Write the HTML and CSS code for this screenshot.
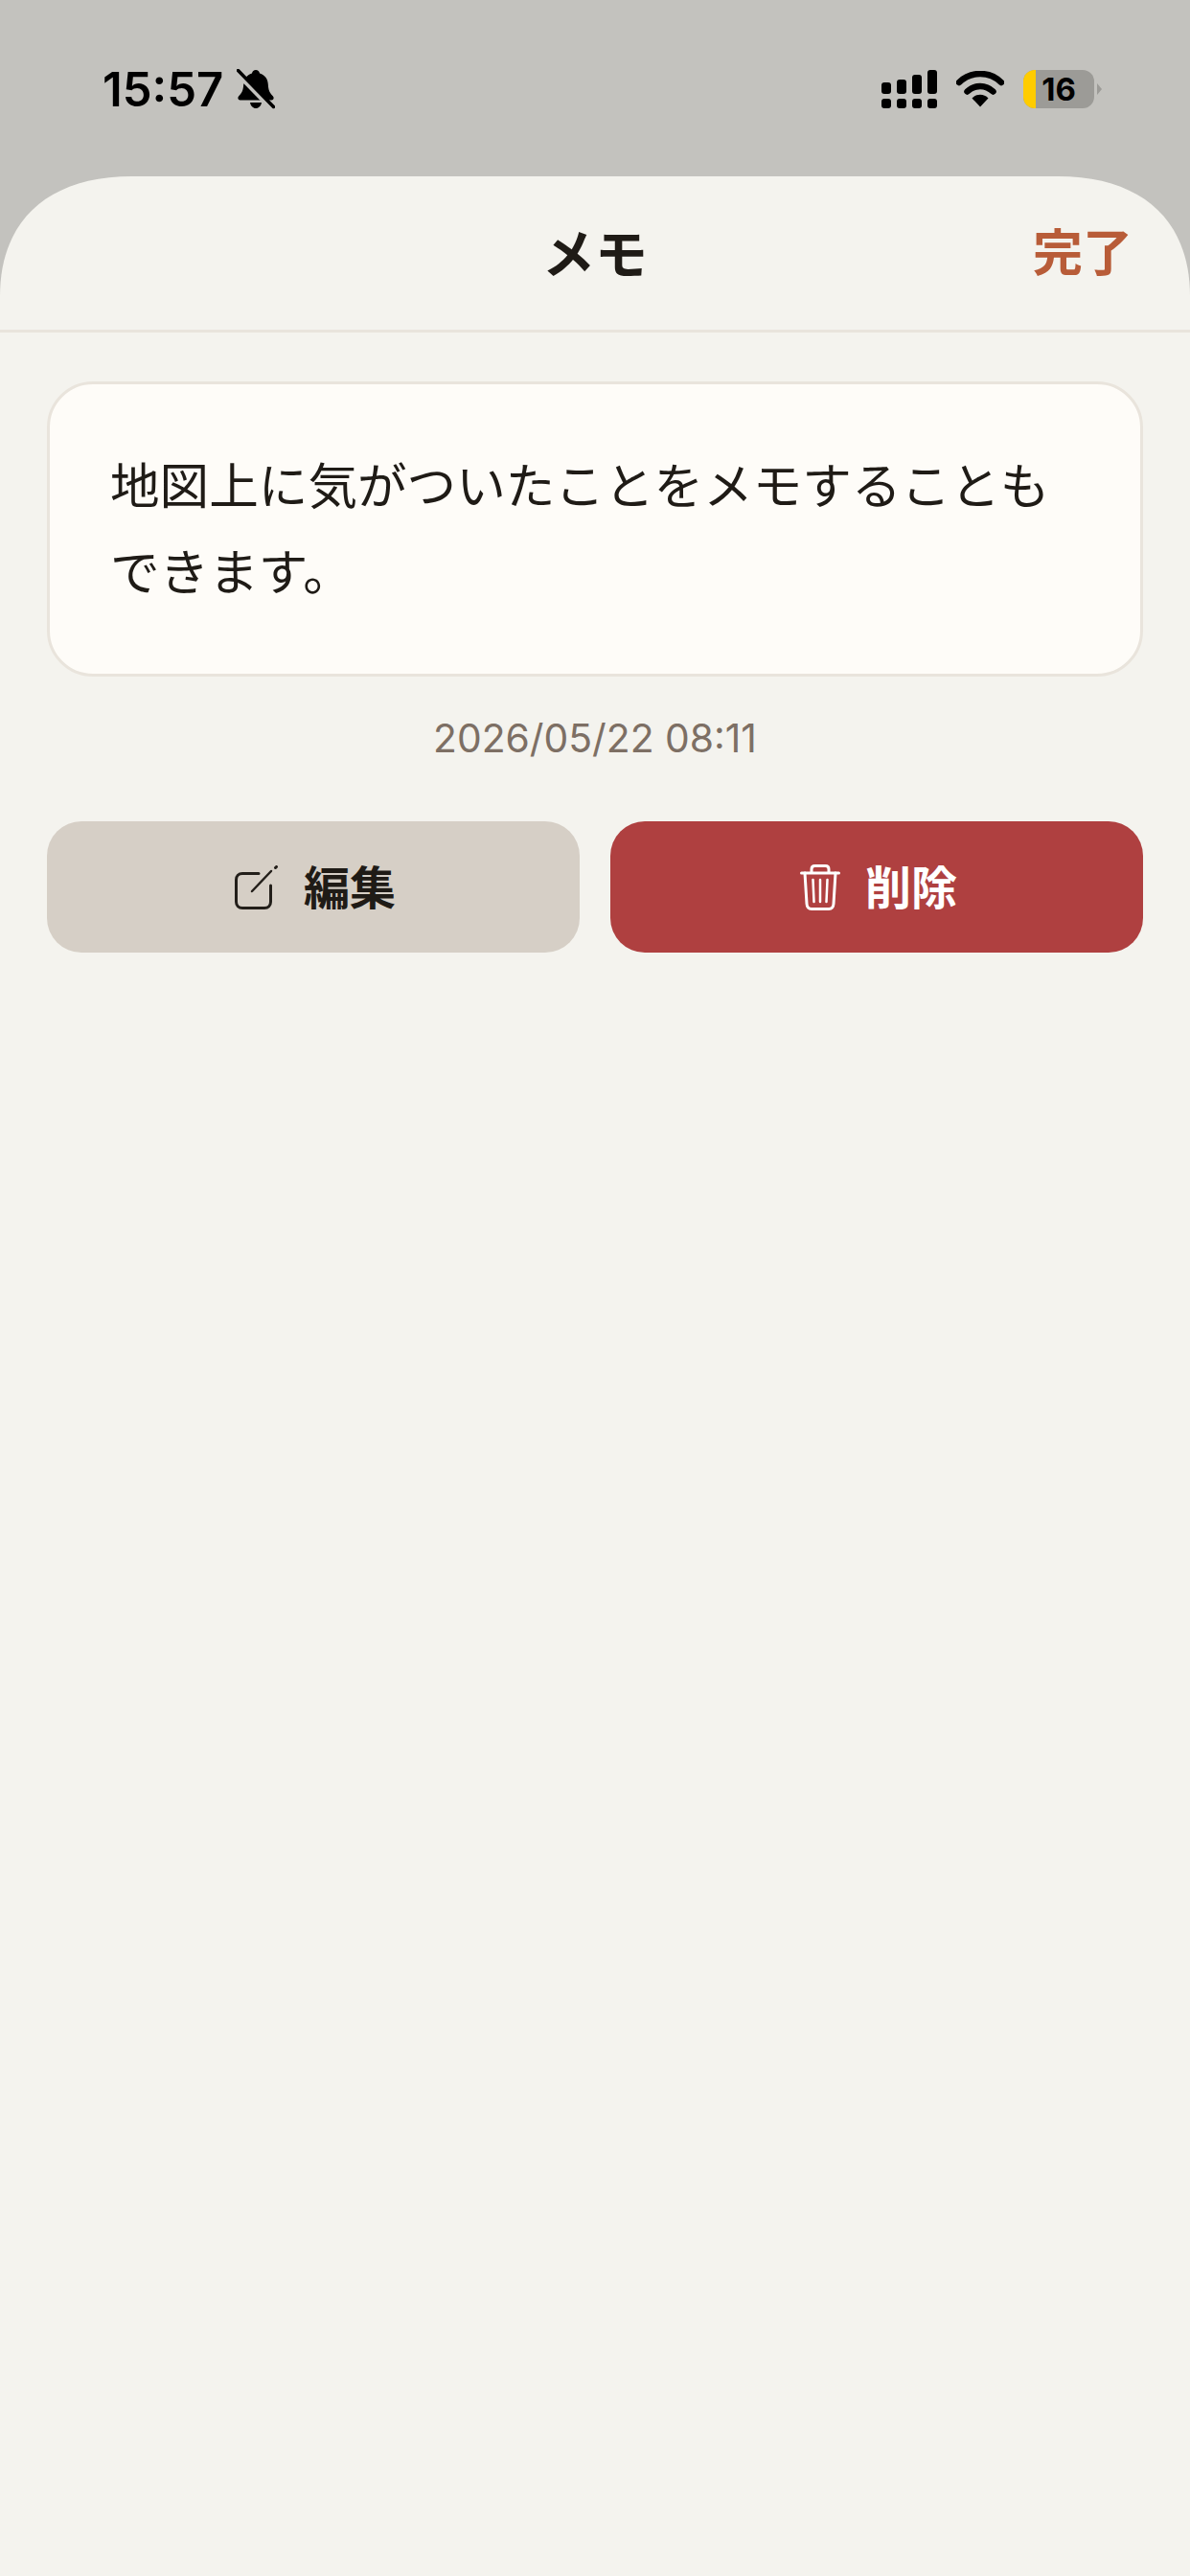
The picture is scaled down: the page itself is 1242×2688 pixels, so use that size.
FILE: index.html
```html
<!DOCTYPE html>
<html>

<head>
    <title>メモ</title>
    <link rel="stylesheet" href="styles.css">
</head>

<body>
    <div class="status-bar">
        <div class="status-left">
            <span class="time">15:57</span>
            <svg class="bell" width="40" height="42" viewBox="0 0 40 42">
                <path d="M20 1c2.200 0 3.600 1.500 4 3.500 5.500 1.600 8.500 6 8.800 11.500.3 6 1.700 9 5 12.200 1.500 1.500 1 4.300-1.500 4.300H3.700c-2.500 0-3-2.800-1.500-4.300 3.300-3.200 4.700-6.200 5-12.200C7.500 10.500 10.500 6.100 16 4.500 16.400 2.500 17.800 1 20 1z" fill="#000" />
                <path d="M14 35h12c-.6 3.500-3 6-6 6s-5.400-2.500-6-6z" fill="#000" />
                <path d="M-3 1l40 41" stroke="#c3c2be" stroke-width="5" />
                <path d="M1.500 1.500l37 38" stroke="#000" stroke-width="3.500" stroke-linecap="round" />
            </svg>
        </div>
        <div class="status-right">
            <svg width="58" height="40" viewBox="0 0 58 40">
                <rect x="0" y="13" width="10" height="12" rx="3" />
                <rect x="16" y="10" width="10" height="15" rx="3" />
                <rect x="32" y="5" width="10" height="20" rx="3" />
                <rect x="48" y="0" width="10" height="25" rx="3" />
                <rect x="0" y="30" width="10" height="10" rx="3" />
                <rect x="16" y="30" width="10" height="10" rx="3" />
                <rect x="32" y="30" width="10" height="10" rx="3" />
                <rect x="48" y="30" width="10" height="10" rx="3" />
            </svg>
            <svg class="wifi" width="50" height="38" viewBox="0 0 50 38">
                <path d="M3 12C15 0 35 0 47 12" fill="none" stroke="#000" stroke-width="6.500" stroke-linecap="round" />
                <path d="M11.500 21.500C19 14 31 14 38.500 21.500" fill="none" stroke="#000" stroke-width="6.500" stroke-linecap="round" />
                <path d="M16.500 28.500C21 23.500 29 23.500 33.500 28.500L25 37.500z" fill="#000" />
            </svg>
            <div class="battery">
                <div class="battery-body">
                    <div class="battery-level"></div>
                    <span class="battery-text">16</span>
                </div>
                <div class="battery-tip"></div>
            </div>
        </div>
    </div>

    <div class="sheet">
        <div class="header">
            <h2 class="title">メモ</h2>
            <a class="done">完了</a>
        </div>
        <div class="content">
            <div class="memo-card">地図上に気がついたことをメモすることもできます。</div>
            <p class="date">2026/05/22 08:11</p>
            <div class="actions">
                <button class="btn btn-edit">
                    <svg width="46" height="46" viewBox="0 0 46 46" fill="none" stroke="#231f1a" stroke-width="3" stroke-linecap="round">
                        <path d="M25 8.500H8C4 8.500 1.500 11 1.500 15v23c0 4 2.500 6.500 6.500 6.500h23c4 0 6.500-2.500 6.500-6.500V21" stroke-linejoin="round" />
                        <path d="M18 27L38 6" stroke-width="2.500" />
                        <path d="M43.500 1.500l-1 1" stroke-width="3" />
                    </svg>
                    <span class="btn-label">編集</span>
                </button>
                <button class="btn btn-delete">
                    <svg width="42" height="48" viewBox="0 0 42 48" fill="none" stroke="#fff" stroke-width="3" stroke-linecap="round" stroke-linejoin="round">
                        <path d="M1.500 9h39" />
                        <path d="M12 8V5c0-2.500 1.500-3.500 3.500-3.500h11C28.500 1.500 30 2.500 30 5v3" />
                        <path d="M5 9l2 32c.2 3.500 2 5.500 5 5.500h18c3 0 4.800-2 5-5.500l2-32" />
                        <path d="M13.500 16l1 23M21 16v23M28.500 16l-1 23" stroke-width="2.500" />
                    </svg>
                    <span class="btn-label">削除</span>
                </button>
            </div>
        </div>
    </div>
</body>
</html>
```

FILE: styles.css
```css
html,
body {
    margin: 0;
    height: 100%;
}

body {
    font-family: Inter, "Noto Sans CJK JP", sans-serif;
    background-color: #c3c2be;
    display: flex;
    flex-direction: column;
    color: #1f1b16;
}

.status-bar {
    height: 184px;
    box-sizing: border-box;
    padding: 0 92px 0 107px;
    display: flex;
    justify-content: space-between;
    align-items: flex-start;
    flex-shrink: 0;
}

.status-left {
    display: flex;
    align-items: center;
    gap: 14px;
    padding-top: 68px;
    height: 50px;
}

.time {
    font-size: 49px;
    font-weight: 600;
    color: #000;
}

.status-right {
    display: flex;
    align-items: center;
    gap: 20px;
    padding-top: 73px;
    height: 40px;
}

.battery {
    display: flex;
    align-items: center;
    gap: 3px;
}

.battery-body {
    position: relative;
    width: 74px;
    height: 40px;
    border-radius: 12px;
    background-color: #9c9b97;
    overflow: hidden;
    display: flex;
    align-items: center;
    justify-content: center;
}

.battery-level {
    position: absolute;
    left: 0;
    top: 0;
    bottom: 0;
    width: 13px;
    background-color: #ffcc00;
}

.battery-text {
    position: relative;
    font-size: 33px;
    font-weight: 700;
    color: #000;
}

.battery-tip {
    width: 0;
    height: 0;
    border-left: 5px solid #9c9b97;
    border-top: 6px solid transparent;
    border-bottom: 6px solid transparent;
}

.sheet {
    flex: 1;
    background-color: #f4f3ee;
    clip-path: path("M0 125C0 48 48 0 138 0H1104C1194 0 1242 48 1242 125V2504H0Z");
}

.header {
    height: 163px;
    box-sizing: border-box;
    border-bottom: 3px solid #e9e4dc;
    display: flex;
    align-items: center;
    justify-content: center;
    position: relative;
}

.title {
    margin: 0 0 6px;
    font-size: 55px;
    font-weight: 700;
    color: #1f1b16;
}

.done {
    position: absolute;
    right: 60px;
    top: 50px;
    font-size: 52px;
    line-height: 62px;
    font-weight: 700;
    color: #b85c38;
}

.content {
    padding: 51px 49px 0;
}

.memo-card {
    box-sizing: border-box;
    height: 308px;
    padding: 61px 56px 0 63px;
    font-size: 51.6px;
    line-height: 90px;
    background-color: #fefcf8;
    border: 3px solid #e9e4dc;
    border-radius: 48px;
}

.date {
    margin: 38px 0 0;
    text-align: center;
    font-size: 40.8px;
    line-height: 52px;
    color: #7d6f64;
}

.actions {
    display: flex;
    gap: 32px;
    margin-top: 61px;
}

.btn {
    flex: 1;
    height: 137px;
    padding: 0 0 0 4px;
    border: none;
    border-radius: 36px;
    font-family: inherit;
    font-size: 48px;
    font-weight: 700;
    display: flex;
    align-items: center;
    justify-content: center;
    gap: 26px;
}

.btn-label {
    margin-bottom: 6px;
}

.btn-edit {
    background-color: #d6cfc6;
    color: #1f1b16;
}

.btn-delete {
    background-color: #af4040;
    color: #fff;
}
```
